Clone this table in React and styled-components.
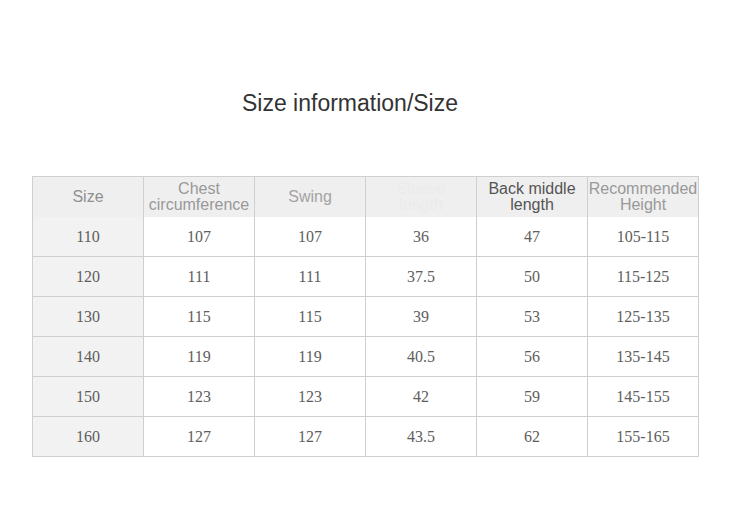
import React from "react";
import styled, { createGlobalStyle } from "styled-components";

const Global = createGlobalStyle`
  html, body { margin: 0; padding: 0; background: #fff; }
  body { font-family: "Liberation Sans", Arial, sans-serif; }
`;

const Page = styled.div`
  width: 750px;
  height: 510px;
  padding: 89px 0 0 32px;
  box-sizing: border-box;
`;

const Title = styled.h1`
  margin: 0;
  width: 636px;
  text-align: center;
  font-family: "Liberation Sans", Arial, sans-serif;
  font-weight: normal;
  font-size: 23px;
  line-height: 28px;
  color: #333;
`;

const Grid = styled.div`
  margin-top: 59px;
  display: grid;
  grid-template-columns: repeat(6, 111px);
  grid-auto-rows: 40px;
  width: 667px;
  border-left: 1px solid #cfcfcf;
  border-top: 1px solid #cfcfcf;
  box-sizing: border-box;
`;

const Cell = styled.div`
  box-sizing: border-box;
  border-right: 1px solid #cfcfcf;
  border-bottom: 1px solid #cfcfcf;
  display: flex;
  align-items: center;
  justify-content: center;
  text-align: center;
  background: ${(p) => (p.$shade ? "#f2f2f2" : "#fff")};
  font-family: "Liberation Serif", "DejaVu Serif", serif;
  font-size: 16px;
  color: #5e5e5e;
  padding-top: 1px;
`;

const HeadCell = styled.div`
  box-sizing: border-box;
  height: 41px;
  border-right: 1px solid #cfcfcf;
  border-bottom: 1px solid #cfcfcf;
  background: #efefef;
  display: flex;
  align-items: center;
  justify-content: center;
  text-align: center;
  font-family: "Liberation Sans", Arial, sans-serif;
  font-size: 16px;
  line-height: 16px;
  color: ${(p) => p.$color || "#999"};
  white-space: nowrap;
  padding-bottom: 1px;
`;

const HeadRow = styled.div`
  display: contents;
`;

const headers = [
  { t: ["Size"], c: "#8f8f8f" },
  { t: ["Chest", "circumference"], c: "#999" },
  { t: ["Swing"], c: "#a3a3a3" },
  { t: ["Sleeve", "length"], c: "#ebebeb" },
  { t: ["Back middle", "length"], c: "#555" },
  { t: ["Recommended", "Height"], c: "#999" },
];

const rows = [
  ["110", "107", "107", "36", "47", "105-115"],
  ["120", "111", "111", "37.5", "50", "115-125"],
  ["130", "115", "115", "39", "53", "125-135"],
  ["140", "119", "119", "40.5", "56", "135-145"],
  ["150", "123", "123", "42", "59", "145-155"],
  ["160", "127", "127", "43.5", "62", "155-165"],
];

export default function App() {
  return (
    <Page>
      <Global />
      <Title>Size information/Size</Title>
      <Grid>
        <HeadRow>
          {headers.map((h, i) => (
            <HeadCell key={i} $color={h.c}>
              <span>
                {h.t.map((l, j) => (
                  <React.Fragment key={j}>
                    {j > 0 && <br />}
                    {l}
                  </React.Fragment>
                ))}
              </span>
            </HeadCell>
          ))}
        </HeadRow>
        {rows.map((r, i) =>
          r.map((v, j) => (
            <Cell key={`${i}-${j}`} $shade={j === 0}>
              {v}
            </Cell>
          ))
        )}
      </Grid>
    </Page>
  );
}
